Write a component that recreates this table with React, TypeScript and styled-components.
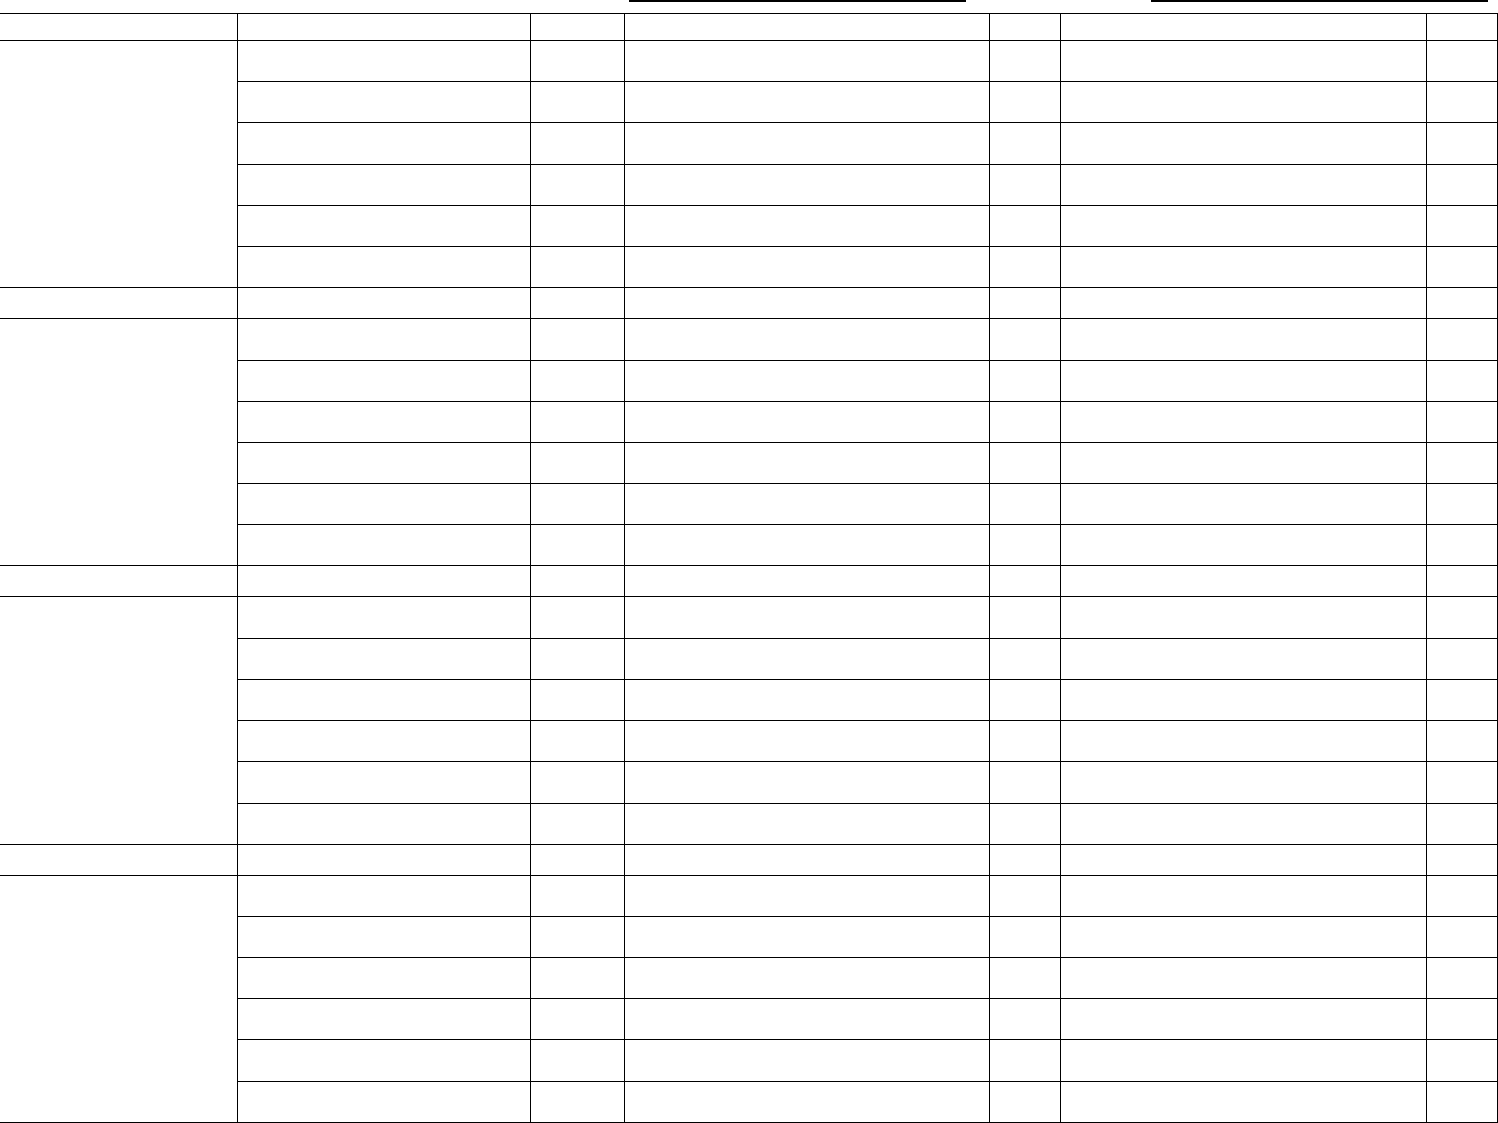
import React from 'react';
import styled, { createGlobalStyle } from 'styled-components';

const GlobalStyle = createGlobalStyle`
  html, body {
    margin: 0;
    padding: 0;
    background: #ffffff;
    font-family: "Liberation Sans", Arial, sans-serif;
  }
  * {
    box-sizing: border-box;
  }
`;

const COLUMNS = [238, 293, 94, 365, 71, 366, 71];
const GROUPS = [
  [41, 41, 42, 41, 41, 41],
  [42, 41, 41, 41, 41, 41],
  [42, 41, 41, 41, 42, 41],
  [41, 41, 41, 41, 42, 41],
];
const HEADER_HEIGHT = 27;
const SINGLE_HEIGHT = 31;

const rowHeights: number[] = [HEADER_HEIGHT];
GROUPS.forEach((g, i) => {
  rowHeights.push(...g);
  if (i < GROUPS.length - 1) rowHeights.push(SINGLE_HEIGHT);
});

const templateColumns = COLUMNS.map((w) => `${w}px`).join(' ');
const templateRows = rowHeights.map((h) => `${h}px`).join(' ');

export default function App() {
  return (
    <>
      <GlobalStyle />
      <Page>
        <FieldStrip>
          <FieldLine />
          <FieldLine />
        </FieldStrip>
        <Sheet>
          {COLUMNS.map((_, c) => (
            <Cell key={`h${c}`} />
          ))}
          {GROUPS.map((group, gi) => (
            <React.Fragment key={`g${gi}`}>
              <GroupCell $span={group.length} />
              {group.map((_, r) =>
                COLUMNS.slice(1).map((__, c) => <Cell key={`g${gi}r${r}c${c}`} />)
              )}
              {gi < GROUPS.length - 1 &&
                COLUMNS.map((_, c) => <Cell key={`s${gi}c${c}`} />)}
            </React.Fragment>
          ))}
        </Sheet>
      </Page>
    </>
  );
}

const Page = styled.div`
  width: 1498px;
  display: flex;
  flex-direction: column;
`;

const FieldStrip = styled.div`
  height: 13px;
  display: flex;
  align-items: flex-start;
  padding-left: 629px;
  gap: 185px;
`;

const FieldLine = styled.div`
  width: 337px;
  height: 2px;
  background: #000000;
`;

const Sheet = styled.div`
  display: grid;
  grid-template-columns: ${templateColumns};
  grid-template-rows: ${templateRows};
  border-top: 1px solid #000000;
`;

const Cell = styled.div`
  border-right: 1px solid #000000;
  border-bottom: 1px solid #000000;
`;

const GroupCell = styled(Cell)<{ $span: number }>`
  grid-column: 1;
  grid-row: span ${(p) => p.$span};
`;
